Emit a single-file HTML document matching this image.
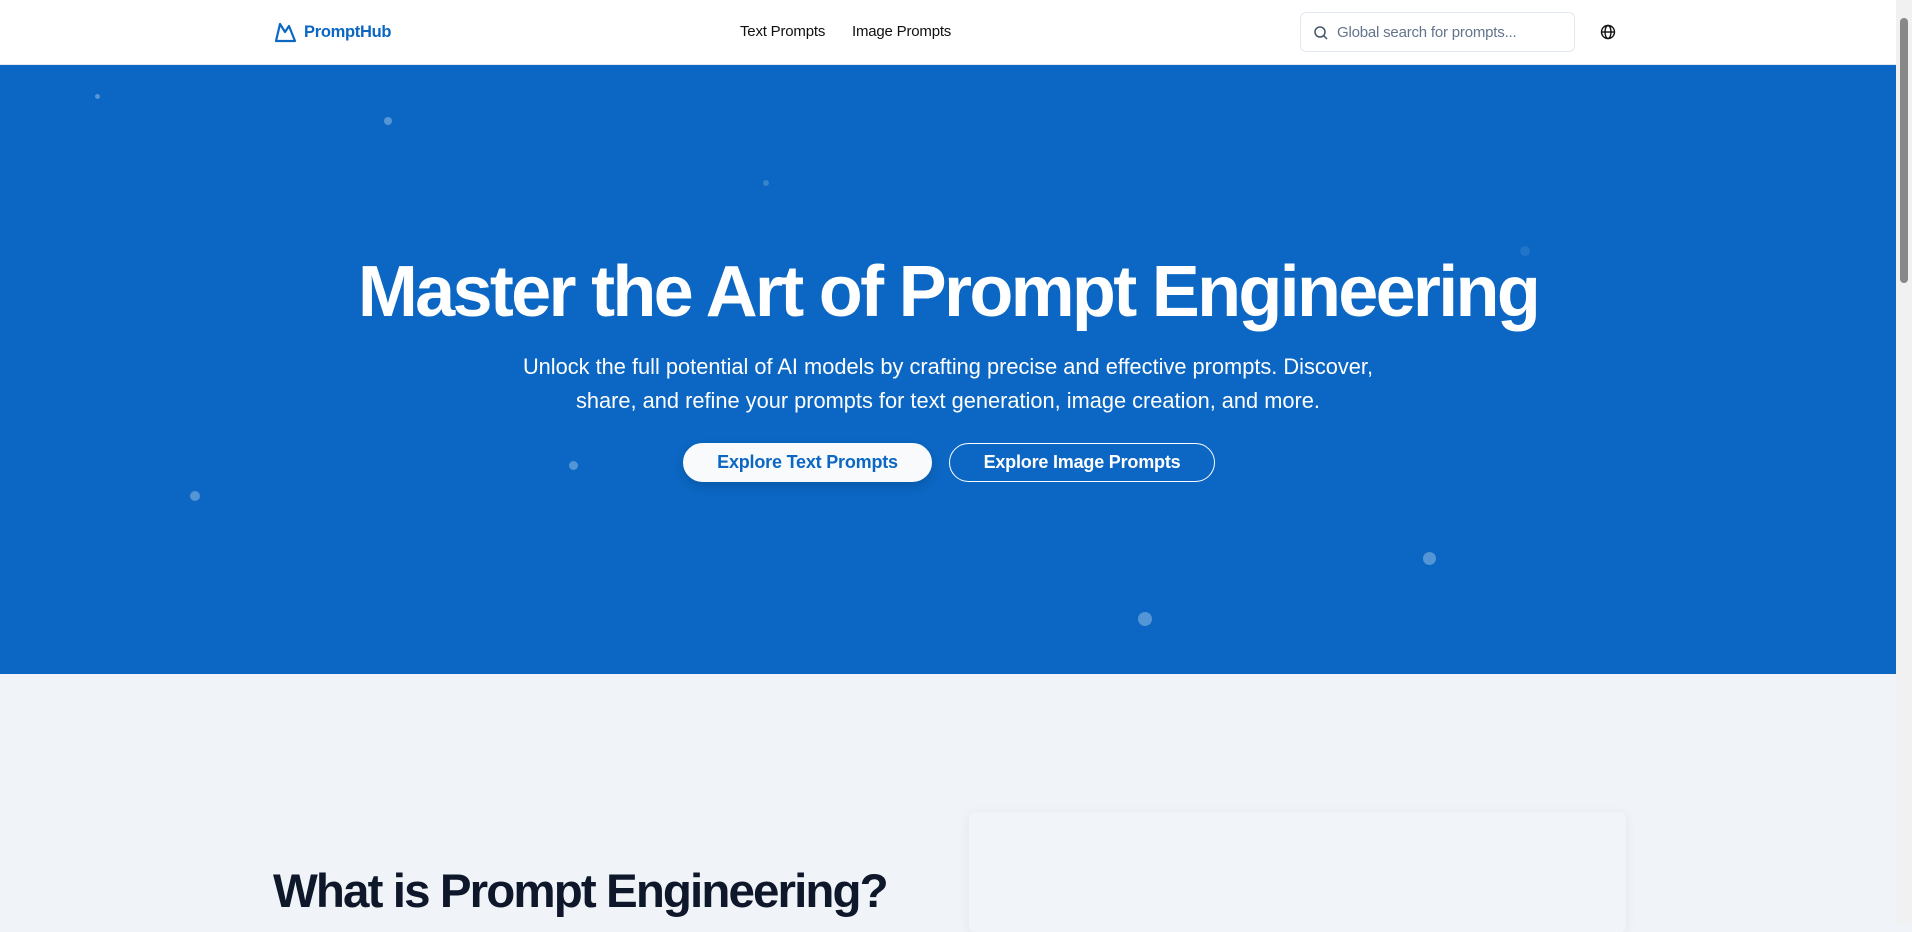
<!DOCTYPE html>
<html><head><meta charset="utf-8"><style>
*{margin:0;padding:0;box-sizing:border-box}
html,body{width:1912px;height:924px;overflow:hidden;font-family:"Liberation Sans",sans-serif;background:#f0f4f8}
.hdr{position:absolute;left:0;top:0;width:1896px;height:65px;background:#fff;border-bottom:1px solid #e2e8f0}
.logo{position:absolute;left:274px;top:21px;display:flex;align-items:center;gap:6px;color:#0b67c2;font-weight:bold;font-size:16.5px;letter-spacing:-0.3px}
.nav{position:absolute;top:23px;font-size:15px;color:#111;letter-spacing:-0.2px}
.search{position:absolute;left:1300px;top:12px;width:275px;height:40px;border:1px solid #e2e8f0;border-radius:6px;background:#fff}
.search span{position:absolute;left:36px;top:11px;font-size:15px;color:#64748b;letter-spacing:-0.2px}
.hero{position:absolute;left:0;top:65px;width:1896px;height:609px;background:#0b67c3}
.dot{position:absolute;border-radius:50%;background:rgba(255,255,255,.3)}
h1{position:absolute;left:0;width:1896px;top:251px;text-align:center;color:#fff;font-size:72px;letter-spacing:-2.7px;font-weight:bold}
.sub{position:absolute;left:0;width:1896px;top:350px;text-align:center;color:#fff;font-size:21.8px;line-height:34px;letter-spacing:0}
.btn{position:absolute;top:443px;height:39px;border-radius:20px;font-weight:bold;font-size:18px;line-height:37px;text-align:center;letter-spacing:-0.2px}
.b1{left:683px;width:249px;background:#f8fafc;color:#0b67c3;border:1px solid #f8fafc;box-shadow:0 4px 10px rgba(0,0,0,.15)}
.b2{left:949px;width:266px;color:#fff;border:1px solid #fff}
.card{position:absolute;left:969px;top:812px;width:657px;height:120px;background:#f1f5f9;box-shadow:0 2px 12px rgba(0,0,0,.06);border-radius:6px}
h2{position:absolute;left:273px;top:864px;font-size:47.5px;letter-spacing:-1.9px;color:#0f172a;font-weight:bold}
.sb{position:absolute;left:1896px;top:0;width:16px;height:924px;background:#f1f1f1}
.thumb{position:absolute;left:1900px;top:18px;width:8px;height:265px;background:#888;border-radius:4px}
</style></head><body>
<div class="hdr">
<div class="logo"><svg width="24" height="22" viewBox="0 0 24 22"><path d="M2 20 L6 3 L11 11 L15 5 L21 20 Z" fill="none" stroke="#0b67c2" stroke-width="2.2" stroke-linejoin="round"/></svg>PromptHub</div>
<div class="nav" style="left:740px">Text Prompts</div>
<div class="nav" style="left:852px">Image Prompts</div>
<div class="search"><svg style="position:absolute;left:12px;top:12px" width="16" height="16" viewBox="0 0 16 16"><circle cx="7" cy="7" r="5" fill="none" stroke="#475569" stroke-width="1.5"/><path d="M10.8 10.8 14 14" stroke="#475569" stroke-width="1.5"/></svg><span>Global search for prompts...</span></div>
<svg style="position:absolute;left:1600px;top:24px" width="16" height="16" viewBox="0 0 16 16" fill="none" stroke="#111" stroke-width="1.4"><circle cx="8" cy="8" r="6.5"/><ellipse cx="8" cy="8" rx="3" ry="6.5"/><path d="M1.5 8h13"/></svg>
</div>
<div class="hero">
<div class="dot" style="left:95px;top:29px;width:5px;height:5px"></div>
<div class="dot" style="left:384px;top:52px;width:8px;height:8px"></div>
<div class="dot" style="left:763px;top:115px;width:6px;height:6px;opacity:.6"></div>
<div class="dot" style="left:1520px;top:181px;width:10px;height:10px;opacity:.3"></div>
<div class="dot" style="left:569px;top:396px;width:9px;height:9px"></div>
<div class="dot" style="left:190px;top:426px;width:10px;height:10px"></div>
<div class="dot" style="left:1423px;top:487px;width:13px;height:13px"></div>
<div class="dot" style="left:1138px;top:547px;width:14px;height:14px"></div>
</div>
<h1>Master the Art of Prompt Engineering</h1>
<div class="sub">Unlock the full potential of AI models by crafting precise and effective prompts. Discover,<br>share, and refine your prompts for text generation, image creation, and more.</div>
<div class="btn b1">Explore Text Prompts</div>
<div class="btn b2">Explore Image Prompts</div>
<div class="card"></div>
<h2>What is Prompt Engineering?</h2>
<div class="sb"></div><div class="thumb"></div>
</body></html>
